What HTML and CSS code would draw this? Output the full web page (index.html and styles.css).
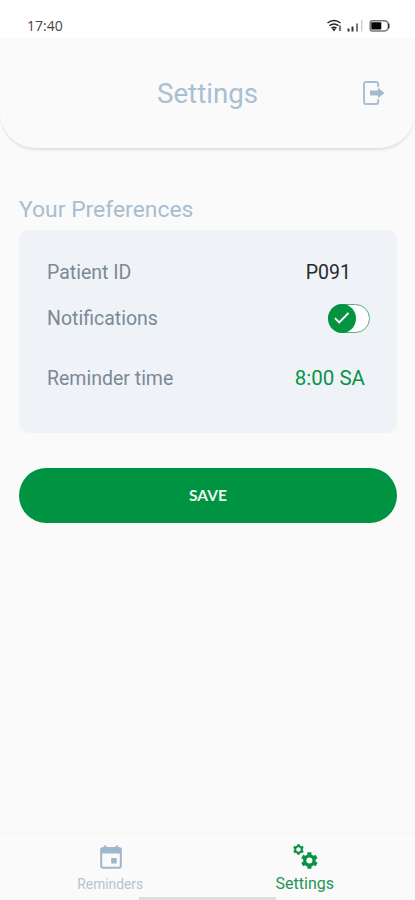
FILE: index.html
```html
<!DOCTYPE html>
<html lang="en">
<head>
<meta charset="utf-8">
<title>Settings</title>
<link rel="stylesheet" href="styles.css">
</head>
<body>
<div class="screen">
  <div class="status">
    <span class="clock">17:40</span>
    <svg class="status-icons" width="66" height="16" viewBox="0 0 66 16" aria-hidden="true">
      <g fill="none" stroke="#252525" stroke-width="1.5">
        <path d="M1.500 5Q8 0 14.500 5M3.500 7.700Q8 4.300 12.500 7.700M5.500 10.200Q8 8.300 10.500 10.200"/>
      </g>
      <path d="M5.800 10.500h4.400L8 13.500z" fill="#252525"/>
      <path d="M14 7.500v5.500" stroke="#777" stroke-width="2.200"/>
      <path d="M22.500 10.500v3M26.500 8.500v5" stroke="#333" stroke-width="2"/>
      <path d="M31 5.500v8" stroke="#777" stroke-width="2"/>
      <path d="M35.700 2v11.500" stroke="#d0d0d0" stroke-width="1.600"/>
      <path d="M46.500 2.700H58q4.500 0 4.500 5.200T58 13H46.500q-2.300 0-2.300-2.500V5.200q0-2.500 2.300-2.500z" fill="#fff" stroke="#777" stroke-width="1.500"/>
      <rect x="45.300" y="4.300" width="10" height="7.200" rx="1" fill="#050505"/>
      <path d="M62.700 5.700v4.400" stroke="#333" stroke-width="1.600"/>
    </svg>
  </div>
  <header class="header">
    <h1>Settings</h1>
    <svg class="logout" width="22" height="24" viewBox="0 0 22 24" aria-hidden="true">
      <path d="M15.200 6V3q0-2-2-2H3Q1 1 1 3v18q0 2 2 2h10.200q2 0 2-2v-3" fill="none" stroke="#a9bed1" stroke-width="1.900"/>
      <path d="M7 9.400h8V6.800l6.500 5.200-6.500 5.200v-2.600H7z" fill="#a4bbcf"/>
    </svg>
  </header>
  <main>
    <h2>Your Preferences</h2>
    <section class="card">
      <div class="row row-id"><span>Patient ID</span><span class="patient">P091</span></div>
      <div class="row row-notify"><span>Notifications</span>
        <span class="switch"><span class="thumb"><svg width="16" height="12" viewBox="0 0 16 12" aria-hidden="true"><path d="M1 6.200l4.200 4.200L14.500 1" fill="none" stroke="#fff" stroke-width="1.900"/></svg></span></span>
      </div>
      <div class="row row-time"><span>Reminder time</span><span class="time">8:00 SA</span></div>
    </section>
    <button class="save">SAVE</button>
  </main>
  <nav class="tabs">
    <div class="tab reminders">
      <svg width="22" height="24" viewBox="0 0 22 24" aria-hidden="true">
        <rect x="1.200" y="3" width="19.600" height="19.800" rx="2" fill="none" stroke="#a0b6cc" stroke-width="2"/>
        <path d="M.7 3h20.600v5.500H.7zM4 .5h2.400V4H4zM15.600.5H18V4h-2.400zM11.200 13h5.500v5.500h-5.500z" fill="#a0b6cc"/>
      </svg>
      <span>Reminders</span>
    </div>
    <div class="tab active">
      <svg width="26" height="26" viewBox="0 0 26 26" aria-hidden="true">
        <g fill="none" stroke="#079343">
          <g transform="translate(6.500 6.500)">
            <circle r="3.300" stroke-width="2"/>
            <path d="M0-3.500v-1.800M0 3.500v1.800M3-1.700l1.600-.9M-3 1.700l-1.600.9M3 1.700l1.600.9M-3-1.700l-1.600-.9" stroke-width="2.500"/>
          </g>
          <g transform="translate(17.400 17.500)">
            <circle r="4.700" stroke-width="3.300"/>
            <path d="M0-5.500v-2.800M0 5.500v2.800M4.800-2.700l2.400-1.400M-4.800 2.700l-2.400 1.400M4.800 2.700l2.400 1.400M-4.800-2.700l-2.400-1.400" stroke-width="4"/>
          </g>
        </g>
      </svg>
      <span>Settings</span>
    </div>
    <div class="home-bar"></div>
  </nav>
</div>
</body>
</html>
```

FILE: styles.css
```css
* { box-sizing: border-box; }
body { margin: 0; background: #fafafa; font-family: Roboto, "Liberation Sans", sans-serif; }
.screen { width: 415px; height: 900px; overflow: hidden; display: flex; flex-direction: column; background: #fafafa; }
.status { height: 38px; flex: none; display: flex; justify-content: space-between; padding: 17px 23px 0 27px; background: #fff; }
.clock { font: 14px/18px "Open Sans", sans-serif; color: #444; }
.status-icons { display: block; margin-top: 1px; }
.header { height: 110px; flex: none; display: grid; grid-template-columns: 1fr 101px 1fr; align-items: center; background: #fafafa; border-radius: 0 0 36px 36px; box-shadow: 0 3px 3px -1px rgba(0, 0, 0, .11); }
h1 { grid-column: 2; margin: 2px 0 0; font-size: 27.7px; line-height: 32px; font-weight: 400; color: #a9bfd3; white-space: nowrap; }
.logout { justify-self: end; margin-right: 30px; }
main { padding: 47px 18px 0 19px; flex: 1; }
h2 { margin: 0; font-size: 22.9px; line-height: 29px; font-weight: 400; color: #a9bdcf; }
.card { margin-top: 6px; height: 203px; border-radius: 10px; background: #eff3f8; padding: 25px 27px 0 28px; color: #7b8995; font-size: 19.500px; }
.row { display: flex; align-items: center; justify-content: space-between; }
.row-id { height: 34px; }
.row-notify { height: 58px; }
.row-time { height: 62px; }
.patient { color: #252a30; margin-right: 19px; }
.time { color: #079447; margin-right: 5px; font-size: 20.500px; }
.switch { display: flex; width: 42px; height: 29px; border: 1px solid #57ae7d; border-radius: 15px; background: #fff; }
.thumb { display: flex; align-items: center; justify-content: center; width: 28px; height: 29px; margin: -1px; border-radius: 50%; background: #039341; }
.save { display: block; width: 100%; height: 55px; margin-top: 35px; padding: 0 0 2px; border: 0; border-radius: 28px; background: #009341; color: #eaf8ef; font: 700 15.500px/20px Lato, sans-serif; }
.tabs { position: relative; height: 67px; flex: none; display: grid; grid-template-columns: 1fr 1fr; padding: 0 13px; border-top: 1px solid #f2f3f3; }
.tab { display: flex; flex-direction: column; align-items: center; padding-top: 11px; font-size: 13.800px; line-height: 18px; color: #b6c4cf; }
.reminders svg { margin-left: 1px; }
.reminders span { margin-top: 6px; }
.active { padding-top: 9px; color: #249554; font-size: 16px; }
.active span { margin-top: 6px; }
.home-bar { position: absolute; left: 139px; bottom: 0; width: 137px; height: 3px; background: #dedede; }
```
